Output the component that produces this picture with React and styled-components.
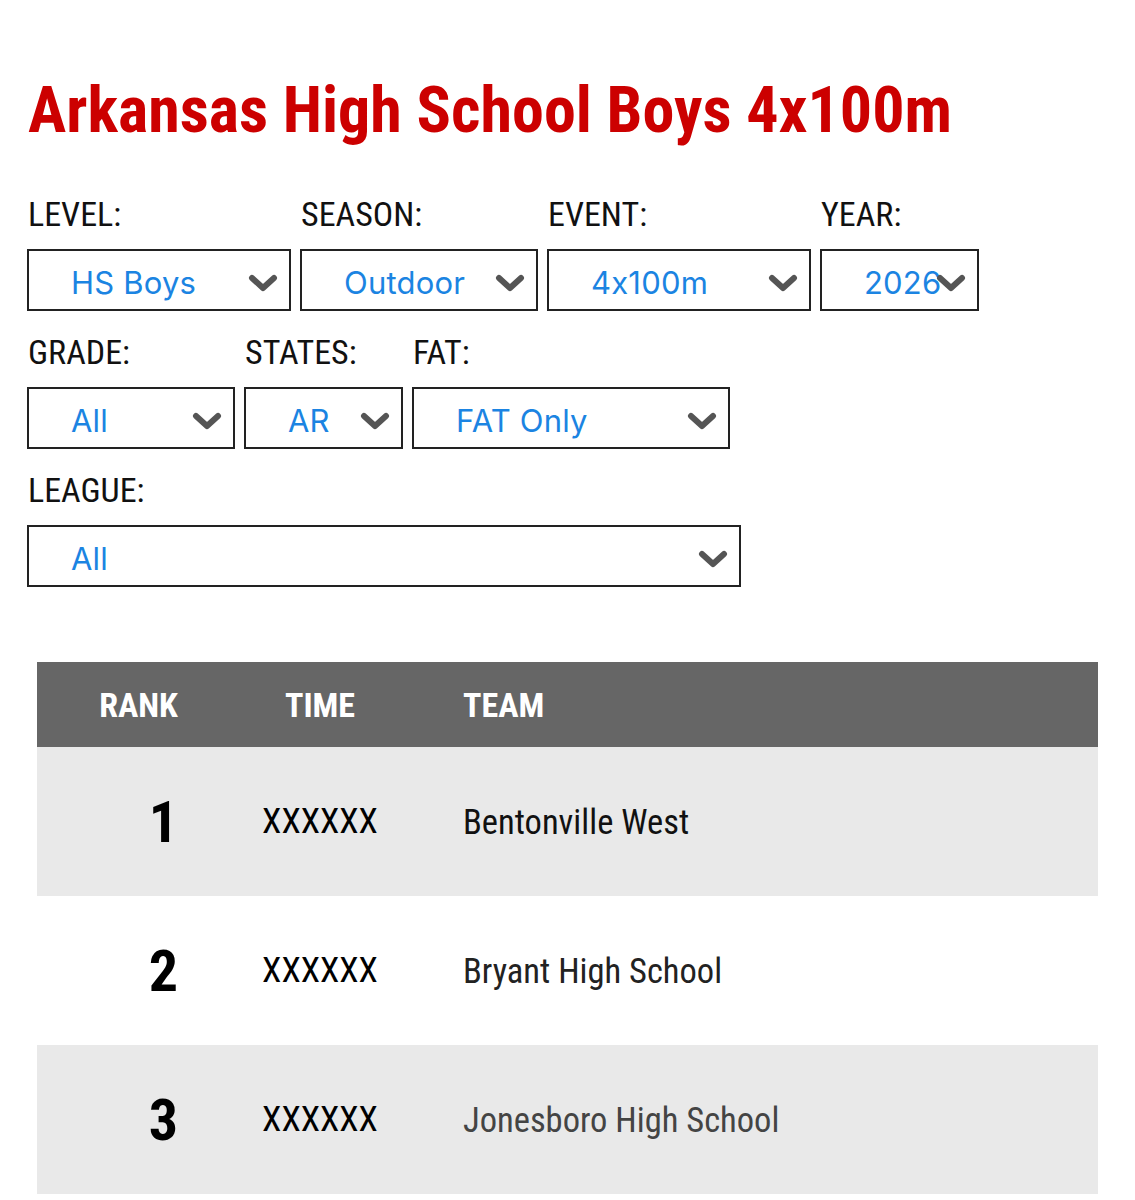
import React from 'react';
import styled, { createGlobalStyle } from 'styled-components';

const GlobalStyle = createGlobalStyle`
  html, body {
    margin: 0;
    padding: 0;
    background: #fff;
  }
  body {
    font-family: 'Roboto Condensed', Roboto, 'Liberation Sans', sans-serif;
    color: #111;
  }
`;

const condensed = `
  font-family: 'Roboto Condensed', Roboto, 'Liberation Sans', sans-serif;
  font-stretch: 75%;
`;

const Page = styled.div`
  padding: 78px 0 0 27px;
  width: 1135px;
  box-sizing: border-box;
`;

const Title = styled.h1`
  ${condensed}
  margin: 0 0 52px 1px;
  color: #cc0000;
  font-size: 64px;
  font-weight: 700;
  line-height: 66px;
`;

const Filters = styled.div`
  display: flex;
  flex-direction: column;
  gap: 23px;
`;

const FilterRow = styled.div`
  display: flex;
  gap: 9px;
`;

const Field = styled.div`
  display: flex;
  flex-direction: column;
  width: ${(p) => p.$w}px;
`;

const Label = styled.label`
  ${condensed}
  font-size: 34px;
  line-height: 36px;
  margin: 0 0 17px 1px;
  color: #111;
  font-weight: 400;
`;

const SelectBox = styled.div`
  position: relative;
  height: 62px;
  box-sizing: border-box;
  border: 2px solid #222;
  display: flex;
  align-items: center;
  padding: 4px 0 0 42px;
`;

const SelectValue = styled.span`
  font-family: Inter, 'Open Sans', 'Liberation Sans', sans-serif;
  font-size: 31px;
  color: #1b84e2;
  letter-spacing: 0.2px;
`;

const Chevron = styled.svg`
  position: absolute;
  right: 11px;
  top: 50%;
  margin-top: -6px;
  width: 30px;
  height: 20px;
`;

const Table = styled.div`
  margin: 75px 0 0 10px;
  width: 1061px;
`;

const Row = styled.div`
  display: grid;
  grid-template-columns: 203px 160px 1fr;
  align-items: center;
  height: ${(p) => (p.$head ? 85 : 149)}px;
  background: ${(p) => (p.$head ? '#666' : p.$shade ? '#e9e9e9' : '#fff')};
`;

const HeadCell = styled.div`
  ${condensed}
  color: #fff;
  font-size: 34px;
  font-weight: 700;
  text-align: ${(p) => p.$align || 'center'};
  padding-left: ${(p) => p.$pad || 0}px;
`;

const RankCell = styled.div`
  ${condensed}
  font-size: 58px;
  font-weight: 700;
  color: #000;
  text-align: right;
  padding-right: 62px;
`;

const TimeCell = styled.div`
  ${condensed}
  font-size: 35px;
  color: #000;
  text-align: center;
`;

const TeamCell = styled.div`
  ${condensed}
  font-size: 34.5px;
  color: ${(p) => p.$color || '#111'};
  padding-left: 63px;
`;

const ChevronIcon = () => (
  <Chevron viewBox="0 0 30 20">
    <polyline
      points="4,4 15,14 26,4"
      fill="none"
      stroke="#555"
      strokeWidth="6"
      strokeLinecap="round"
      strokeLinejoin="round"
    />
  </Chevron>
);

const Select = ({ label, value, width }) => (
  <Field $w={width}>
    <Label>{label}</Label>
    <SelectBox>
      <SelectValue>{value}</SelectValue>
      <ChevronIcon />
    </SelectBox>
  </Field>
);

const filters = [
  [
    { label: 'LEVEL:', value: 'HS Boys', width: 264 },
    { label: 'SEASON:', value: 'Outdoor', width: 238 },
    { label: 'EVENT:', value: '4x100m', width: 264 },
    { label: 'YEAR:', value: '2026', width: 159 },
  ],
  [
    { label: 'GRADE:', value: 'All', width: 208 },
    { label: 'STATES:', value: 'AR', width: 159 },
    { label: 'FAT:', value: 'FAT Only', width: 318 },
  ],
  [{ label: 'LEAGUE:', value: 'All', width: 714 }],
];

const results = [
  { rank: 1, time: 'XXXXXX', team: 'Bentonville West', color: '#111' },
  { rank: 2, time: 'XXXXXX', team: 'Bryant High School', color: '#222' },
  { rank: 3, time: 'XXXXXX', team: 'Jonesboro High School', color: '#444' },
];

export default function App() {
  return (
    <>
      <GlobalStyle />
      <Page>
        <Title>Arkansas High School Boys 4x100m</Title>
        <Filters>
          {filters.map((row, i) => (
            <FilterRow key={i}>
              {row.map((f) => (
                <Select key={f.label} {...f} />
              ))}
            </FilterRow>
          ))}
        </Filters>
        <Table>
          <Row $head>
            <HeadCell>RANK</HeadCell>
            <HeadCell>TIME</HeadCell>
            <HeadCell $align="left" $pad={63}>TEAM</HeadCell>
          </Row>
          {results.map((r, i) => (
            <Row key={r.rank} $shade={i % 2 === 0}>
              <RankCell>{r.rank}</RankCell>
              <TimeCell>{r.time}</TimeCell>
              <TeamCell $color={r.color}>{r.team}</TeamCell>
            </Row>
          ))}
        </Table>
      </Page>
    </>
  );
}
